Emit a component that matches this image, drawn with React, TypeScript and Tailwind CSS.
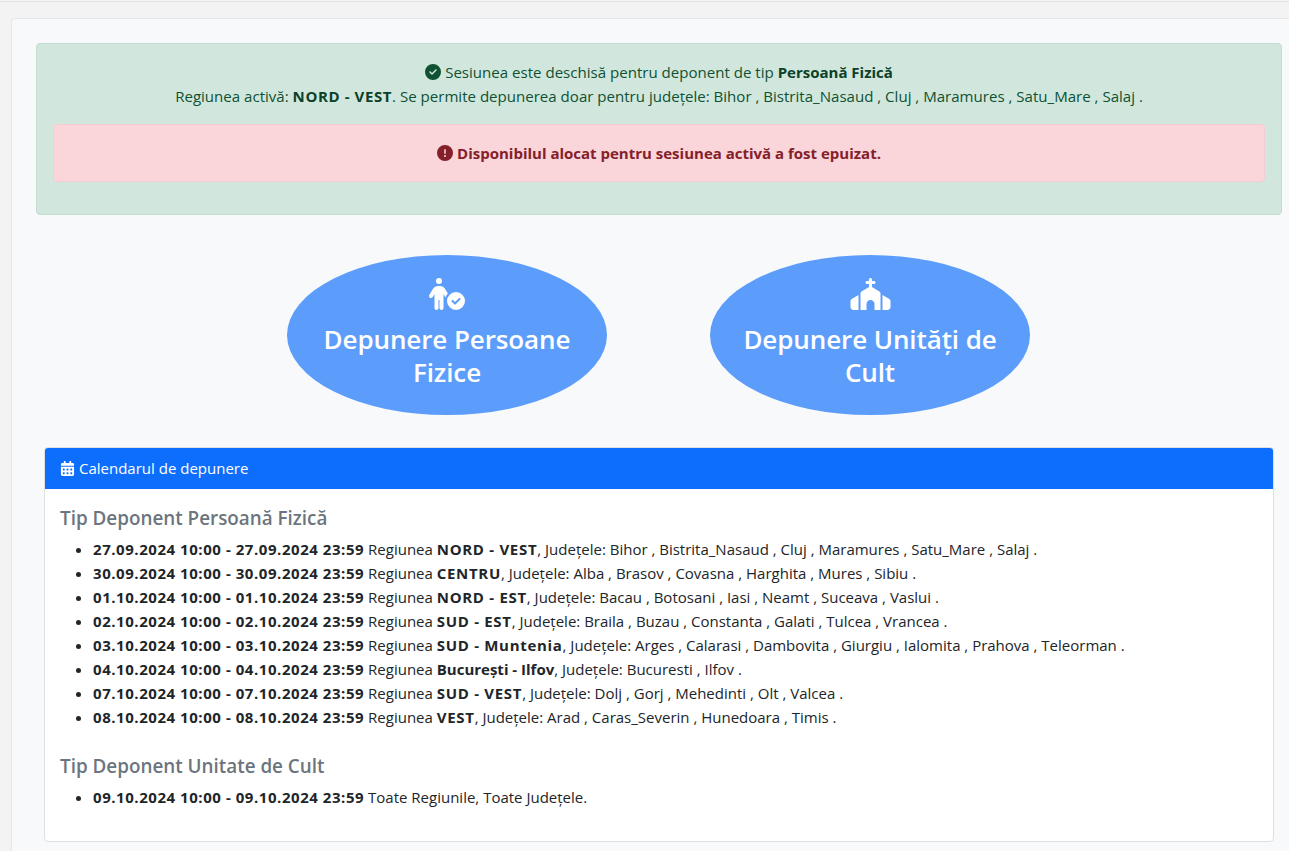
import { FaCircleCheck, FaCircleExclamation, FaPersonCircleCheck, FaChurch, FaCalendarDays } from "react-icons/fa6";

const persoane: [string, string, string][] = [
  ["27.09.2024 10:00 - 27.09.2024 23:59", "NORD - VEST", "Bihor , Bistrita_Nasaud , Cluj , Maramures , Satu_Mare , Salaj ."],
  ["30.09.2024 10:00 - 30.09.2024 23:59", "CENTRU", "Alba , Brasov , Covasna , Harghita , Mures , Sibiu ."],
  ["01.10.2024 10:00 - 01.10.2024 23:59", "NORD - EST", "Bacau , Botosani , Iasi , Neamt , Suceava , Vaslui ."],
  ["02.10.2024 10:00 - 02.10.2024 23:59", "SUD - EST", "Braila , Buzau , Constanta , Galati , Tulcea , Vrancea ."],
  ["03.10.2024 10:00 - 03.10.2024 23:59", "SUD - Muntenia", "Arges , Calarasi , Dambovita , Giurgiu , Ialomita , Prahova , Teleorman ."],
  ["04.10.2024 10:00 - 04.10.2024 23:59", "București - Ilfov", "Bucuresti , Ilfov ."],
  ["07.10.2024 10:00 - 07.10.2024 23:59", "SUD - VEST", "Dolj , Gorj , Mehedinti , Olt , Valcea ."],
  ["08.10.2024 10:00 - 08.10.2024 23:59", "VEST", "Arad , Caras_Severin , Hunedoara , Timis ."],
];

function Oval({ icon, children }: { icon: React.ReactNode; children: React.ReactNode }) {
  return (
    <div className="w-[320px] h-[160px] rounded-[50%] bg-[#5c9dfb] text-white flex flex-col items-center pt-[23px] px-8 text-center">
      <div className="h-[32px] flex items-center justify-center">{icon}</div>
      <div className="text-[26px] leading-[33px] font-semibold mt-[13px] tracking-[-0.1px]">{children}</div>
    </div>
  );
}

export default function App() {
  return (
    <div className="h-[851px] w-full overflow-hidden bg-[#f3f3f3] text-[15px] leading-[24px] text-[#212529] font-['Open_Sans',sans-serif]">
      <div className="h-[2px] mt-px border-t border-[#e4e4e4]" />
      <div className="pt-[15px] pl-[11px]">
        <div className="w-[1296px] rounded-[4px] border border-[#e6e6e6] bg-[#f8f9fa] pt-[24px] pl-[24px] pb-[20px]">
          <div className="w-[1246px] h-[172px] rounded-[4px] border border-[#c2dcd0] bg-[#d1e7dd] text-[#0f5132] text-[15.07px] px-[16px] pt-[16px] text-center">
            <div className="flex items-center justify-center gap-[4px]">
              <FaCircleCheck className="text-[16px]" />
              <span>Sesiunea este deschisă pentru deponent de tip <b className="font-bold text-[15px] text-[#0c4128]">Persoană Fizică</b></span>
            </div>
            <div>
              Regiunea activă: <b className="font-bold text-[15px] tracking-[0.6px] text-[#0c4128]">NORD - VEST</b>. Se permite depunerea doar pentru județele: Bihor , Bistrita_Nasaud , Cluj , Maramures , Satu_Mare , Salaj .
            </div>
            <div className="mt-[16px] h-[58px] rounded-[4px] border border-[#f5ccd1] bg-[#fad5da] text-[#842029] font-bold text-[15px] flex items-center justify-center gap-[4px]">
              <FaCircleExclamation className="text-[16px]" />
              <span>Disponibilul alocat pentru sesiunea activă a fost epuizat.</span>
            </div>
          </div>
          <div className="w-[1245px] flex justify-center gap-[103px] mt-[40px]">
            <Oval icon={<FaPersonCircleCheck className="w-[38px] h-[32px]" />}>Depunere Persoane Fizice</Oval>
            <Oval icon={<FaChurch className="w-[41px] h-[32px]" />}>Depunere Unități de Cult</Oval>
          </div>
          <div className="ml-[8px] w-[1230px] mt-[32px] h-[395px] rounded-[4px] border border-[#dfdfdf] bg-white">
            <div className="h-[41px] rounded-t-[3px] bg-[#0d6efd] text-white text-[15px] flex items-center pl-[15px] pb-[1px] gap-[4px]">
              <FaCalendarDays className="text-[15px]" />
              <span>Calendarul de depunere</span>
            </div>
            <div className="pl-[15px] pt-[17px]">
              <h5 className="text-[18.85px] leading-[24px] font-semibold text-[#6c757d] mb-[7px]">Tip Deponent Persoană Fizică</h5>
              <ul className="list-disc pl-[33px]">
                {persoane.map(([d, r, j]) => (
                  <li key={d}>
                    <b className="font-bold tracking-[0.55px]">{d}</b> Regiunea <b className={r === "București - Ilfov" ? "font-bold" : "font-bold tracking-[0.7px]"}>{r}</b>, Județele: {j}
                  </li>
                ))}
              </ul>
              <h5 className="text-[18.85px] leading-[24px] font-semibold text-[#6c757d] mt-[25px] mb-[7px]">Tip Deponent Unitate de Cult</h5>
              <ul className="list-disc pl-[33px]">
                <li><b className="font-bold tracking-[0.55px]">09.10.2024 10:00 - 09.10.2024 23:59</b> Toate Regiunile, Toate Județele.</li>
              </ul>
            </div>
          </div>
        </div>
      </div>
    </div>
  );
}
